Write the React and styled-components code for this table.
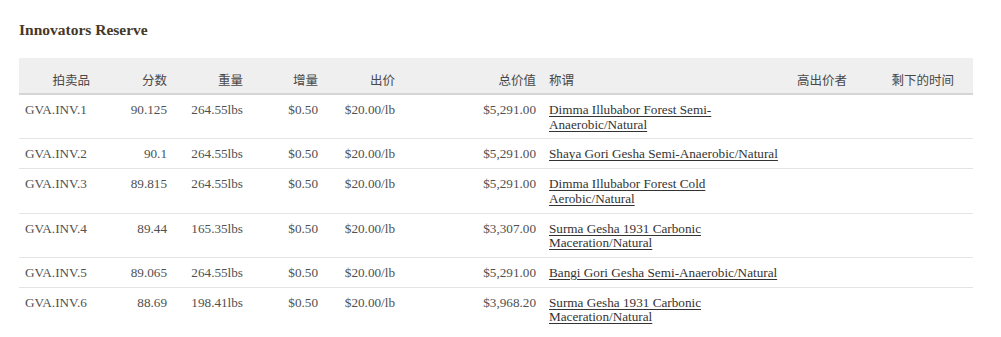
import React from "react";
import styled, { createGlobalStyle } from "styled-components";

const Global = createGlobalStyle`
  html, body { margin: 0; padding: 0; background: #ffffff; }
  body { font-family: "Liberation Serif", "Noto Sans CJK SC", serif; }
`;

const Page = styled.div`
  padding: 20px 19px 0 19px;
`;

const Title = styled.h2`
  margin: 0 0 18px 0;
  font-family: "Liberation Serif", serif;
  font-size: 15.5px;
  line-height: 20px;
  font-weight: bold;
  color: #45382a;
`;

const Table = styled.table`
  width: 954px;
  table-layout: fixed;
  border-collapse: collapse;
  font-family: "Liberation Serif", "Noto Sans CJK SC", serif;
`;

const HeadRow = styled.tr`
  background: #efefef;
`;

const Th = styled.th`
  font-family: "Noto Sans CJK SC", sans-serif;
  font-weight: normal;
  font-size: 12.5px;
  line-height: 15px;
  color: #484848;
  padding: 14px ${(p) => (p.$pr != null ? p.$pr : 6)}px 6px ${(p) => (p.$pl != null ? p.$pl : 6)}px;
  text-align: ${(p) => p.$align || "right"};
  border-bottom: 2px solid #d5d5d5;
  white-space: nowrap;
`;

const Row = styled.tr`
  border-bottom: 1px solid #e4e4e4;
  &:last-child {
    border-bottom: none;
  }
`;

const Td = styled.td`
  font-size: 13.2px;
  line-height: 14.7px;
  color: #505050;
  padding: 8px ${(p) => (p.$pr != null ? p.$pr : 6)}px 6px ${(p) => (p.$pl != null ? p.$pl : 6)}px;
  text-align: ${(p) => p.$align || "right"};
  vertical-align: top;
  white-space: nowrap;
`;

const Link = styled.a`
  color: #333333;
  text-decoration: underline;
  text-underline-offset: 2px;
  cursor: pointer;
`;

const columns = [77, 77, 76, 75, 77, 141, 248, 63, 120];

const headers = [
  { label: "拍卖品" },
  { label: "分数" },
  { label: "重量" },
  { label: "增量" },
  { label: "出价" },
  { label: "总价值" },
  { label: "称谓", align: "left", pl: 7 },
  { label: "高出价者" },
  { label: "剩下的时间", pr: 19 },
];

const rows = [
  ["GVA.INV.1", "90.125", "264.55lbs", "$5,291.00", ["Dimma Illubabor Forest Semi-", "Anaerobic/Natural"]],
  ["GVA.INV.2", "90.1", "264.55lbs", "$5,291.00", ["Shaya Gori Gesha Semi-Anaerobic/Natural"]],
  ["GVA.INV.3", "89.815", "264.55lbs", "$5,291.00", ["Dimma Illubabor Forest Cold", "Aerobic/Natural"]],
  ["GVA.INV.4", "89.44", "165.35lbs", "$3,307.00", ["Surma Gesha 1931 Carbonic", "Maceration/Natural"]],
  ["GVA.INV.5", "89.065", "264.55lbs", "$5,291.00", ["Bangi Gori Gesha Semi-Anaerobic/Natural"]],
  ["GVA.INV.6", "88.69", "198.41lbs", "$3,968.20", ["Surma Gesha 1931 Carbonic", "Maceration/Natural"]],
];

export default function App() {
  return (
    <Page>
      <Global />
      <Title>Innovators Reserve</Title>
      <Table>
        <colgroup>
          {columns.map((w, i) => (
            <col key={i} style={{ width: w }} />
          ))}
        </colgroup>
        <thead>
          <HeadRow>
            {headers.map((h) => (
              <Th key={h.label} $align={h.align} $pl={h.pl} $pr={h.pr}>
                {h.label}
              </Th>
            ))}
          </HeadRow>
        </thead>
        <tbody>
          {rows.map(([lot, score, weight, total, name]) => (
            <Row key={lot}>
              <Td $align="left">{lot}</Td>
              <Td>{score}</Td>
              <Td>{weight}</Td>
              <Td>$0.50</Td>
              <Td>$20.00/lb</Td>
              <Td>{total}</Td>
              <Td $align="left" $pl={7}>
                {name.map((line, i) => (
                  <React.Fragment key={i}>
                    {i > 0 && <br />}
                    <Link>{line}</Link>
                  </React.Fragment>
                ))}
              </Td>
              <Td></Td>
              <Td $pr={19}></Td>
            </Row>
          ))}
        </tbody>
      </Table>
    </Page>
  );
}
